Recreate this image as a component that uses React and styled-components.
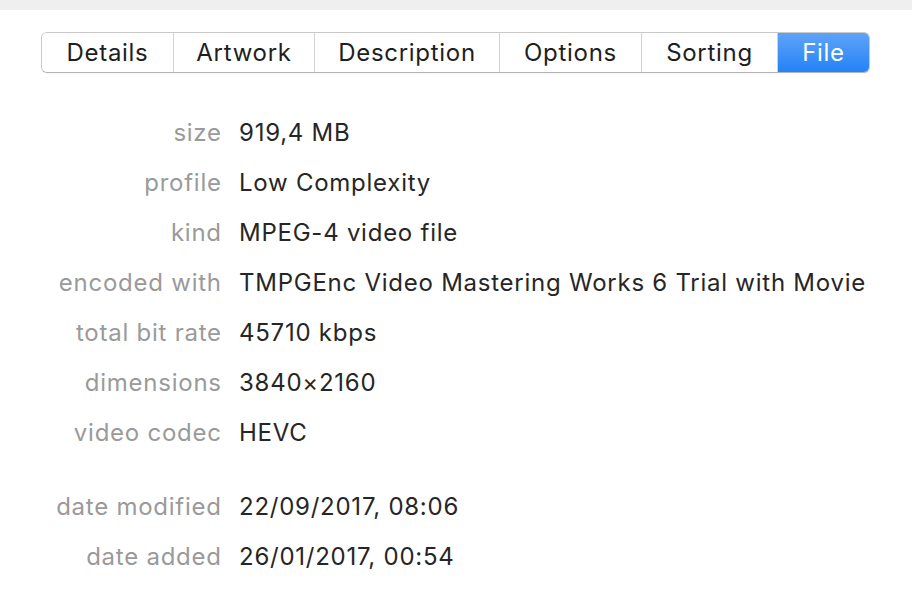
import React from "react";
import styled, { createGlobalStyle } from "styled-components";

const Global = createGlobalStyle`
  html, body { margin: 0; padding: 0; background: #ffffff; }
  body { font-family: Inter, "Liberation Sans", Arial, sans-serif; -webkit-font-smoothing: antialiased; }
`;

const Page = styled.div`
  width: 912px;
  height: 600px;
  background: #ffffff;
  display: flex;
  flex-direction: column;
  overflow: hidden;
`;

const TopStrip = styled.div`
  height: 10px;
  background: #efefef;
  flex: none;
`;

const TabBar = styled.div`
  display: flex;
  margin: 22px 0 0 41px;
  width: 829px;
  height: 41px;
  box-sizing: border-box;
  border: 1px solid #c9c9c9;
  border-bottom-color: #b5b5b5;
  border-radius: 6px;
  overflow: hidden;
  box-shadow: 0 1px 1px rgba(0,0,0,0.04);
`;

const Tab = styled.div`
  flex: none;
  width: ${(p) => p.$w}px;
  display: flex;
  align-items: center;
  justify-content: center;
  font-size: 24px;
  letter-spacing: 0.7px;
  color: ${(p) => (p.$active ? "#ffffff" : "#1e1e1e")};
  background: ${(p) =>
    p.$active ? "linear-gradient(#5fa3f9, #2383f6)" : "#ffffff"};
  border-left: ${(p) => (p.$first ? "none" : "1px solid #d2d2d2")};
  box-sizing: border-box;
`;

const Info = styled.div`
  display: grid;
  grid-template-columns: 221px auto;
  column-gap: 18px;
  margin-top: 35px;
  align-items: center;
`;

const Label = styled.div`
  justify-self: end;
  font-size: 24px;
  letter-spacing: 0.75px;
  margin-right: -0.75px;
  line-height: 50px;
  color: #9a9a9a;
  white-space: nowrap;
  margin-top: ${(p) => (p.$gap ? "24px" : "0")};
`;

const Value = styled.div`
  font-size: 24px;
  letter-spacing: 0.75px;
  line-height: 50px;
  color: #262626;
  white-space: nowrap;
  margin-top: ${(p) => (p.$gap ? "24px" : "0")};
`;

const tabs = [
  ["Details", 131],
  ["Artwork", 141],
  ["Description", 185],
  ["Options", 142],
  ["Sorting", 136],
  ["File", 92],
];

const rows = [
  ["size", "919,4 MB"],
  ["profile", "Low Complexity"],
  ["kind", "MPEG-4 video file"],
  ["encoded with", "TMPGEnc Video Mastering Works 6 Trial with Movie"],
  ["total bit rate", "45710 kbps"],
  ["dimensions", "3840×2160"],
  ["video codec", "HEVC"],
  ["date modified", "22/09/2017, 08:06", true],
  ["date added", "26/01/2017, 00:54"],
];

export default function App() {
  return (
    <Page>
      <Global />
      <TopStrip />
      <TabBar>
        {tabs.map(([t, w], i) => (
          <Tab key={t} $w={w} $first={i === 0} $active={t === "File"}>
            {t}
          </Tab>
        ))}
      </TabBar>
      <Info>
        {rows.map(([l, v, gap]) => (
          <React.Fragment key={l}>
            <Label $gap={gap}>{l}</Label>
            <Value $gap={gap}>{v}</Value>
          </React.Fragment>
        ))}
      </Info>
    </Page>
  );
}
